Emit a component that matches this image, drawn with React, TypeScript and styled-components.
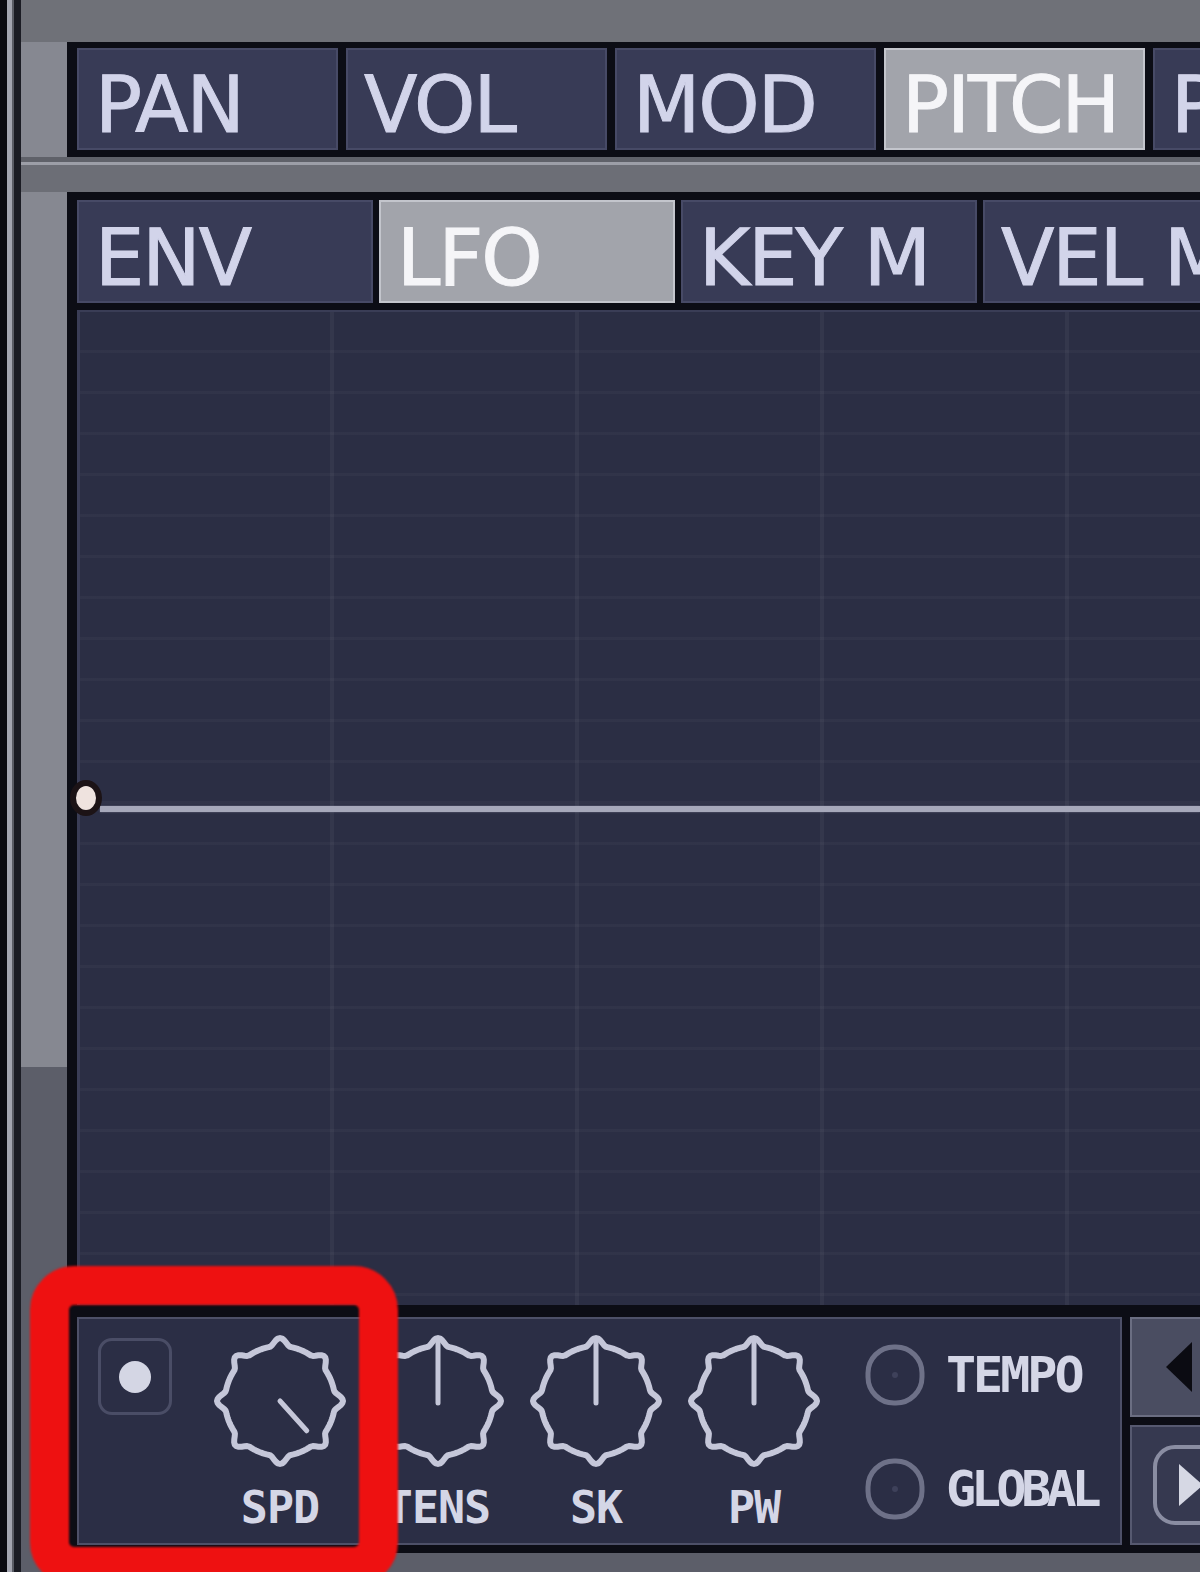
import React from "react";
import styled, { createGlobalStyle } from "styled-components";

const Global = createGlobalStyle`
  html, body { margin: 0; padding: 0; background: #5c5e69; }
  #root { width: 1200px; height: 1572px; }
`;

const Root = styled.div`
  position: relative;
  width: 1200px;
  height: 1572px;
  overflow: hidden;
  display: flex;
  font-family: "DejaVu Sans", "Liberation Sans", sans-serif;
`;

const Rail = styled.div`
  width: 21px;
  flex: none;
  background: linear-gradient(90deg, #0a0a10 0 7px, #a3a5b0 7px 12px, #5b5d66 12px 14px, #1b1c24 14px 21px);
`;

const Body = styled.div`
  flex: 1;
  display: flex;
  flex-direction: column;
  min-width: 0;
  background: linear-gradient(180deg, #6f7178 0 42px, #868891 42px 1067px, #5c5e69 1067px);
`;

const TopGap = styled.div`
  height: 42px;
  flex: none;
`;

const Frame = styled.div<{ $pad: string }>`
  margin-left: 46px;
  background: #0c0d15;
  padding: ${(p) => p.$pad};
  display: flex;
  flex-direction: column;
`;

const Strip = styled.div`
  height: 35px;
  flex: none;
  background: linear-gradient(180deg, #5f6169 0 5px, #9c9ea7 5px 8px, #6c6e76 8px);
`;

const TabRow = styled.div<{ $gap: number }>`
  display: flex;
  gap: ${(p) => p.$gap}px;
  white-space: nowrap;
`;

const Tab = styled.div<{ $w: number; $h: number; $active?: boolean; $top: number }>`
  flex: none;
  box-sizing: border-box;
  width: ${(p) => p.$w}px;
  height: ${(p) => p.$h}px;
  padding: ${(p) => p.$top}px 0 0 16px;
  background: ${(p) => (p.$active ? "#a2a4ab" : "#383b56")};
  border: 2px solid ${(p) => (p.$active ? "#c3c5cc" : "#474a66")};
  color: ${(p) => (p.$active ? "#f5f5f8" : "#d2d4ea")};
  font-size: 78px;
  line-height: 1;
  letter-spacing: -2px;
  -webkit-text-stroke: 1px ${(p) => (p.$active ? "#f5f5f8" : "#d2d4ea")};
  overflow: hidden;
`;

const Graph = styled.div`
  position: relative;
  height: 995px;
  margin-top: 7px;
  box-sizing: border-box;
  border-top: 2px solid #3a3d56;
  border-left: 3px solid #3a3d56;
  background-color: #2b2e44;
  background-image:
    linear-gradient(90deg, transparent 0 250px, rgba(255,255,255,0.045) 250px 254px, transparent 254px 495px,
      rgba(255,255,255,0.045) 495px 499px, transparent 499px 740px, rgba(255,255,255,0.045) 740px 744px,
      transparent 744px 985px, rgba(255,255,255,0.045) 985px 989px, transparent 989px),
    repeating-linear-gradient(180deg, transparent 0 38px, rgba(255,255,255,0.028) 38px 41px);
`;

const CenterLine = styled.div`
  position: absolute;
  left: 20px;
  right: 0;
  top: 494px;
  height: 6px;
  background: #a6a8ba;
  box-shadow: 0 0 2px rgba(166, 168, 186, 0.6);
`;

const Point = styled.div`
  position: absolute;
  left: -10px;
  top: 468px;
  width: 20px;
  height: 24px;
  border-radius: 50%;
  background: #efe3df;
  border: 6px solid #1c1316;
`;

const Toolbar = styled.div`
  display: flex;
  gap: 8px;
  margin-top: 12px;
  height: 228px;
`;

const Panel = styled.div`
  flex: none;
  width: 1045px;
  box-sizing: border-box;
  background: #2b2e45;
  border: 2px solid #4d5068;
  display: flex;
  align-items: flex-start;
  padding-left: 19px;
`;

const LedButton = styled.div`
  flex: none;
  margin-top: 19px;
  width: 74px;
  height: 77px;
  box-sizing: border-box;
  border: 3px solid #4a4d66;
  border-radius: 14px;
  display: flex;
  align-items: center;
  justify-content: center;
`;

const LedDot = styled.div`
  width: 32px;
  height: 32px;
  border-radius: 50%;
  background: #d4d6e4;
`;

const Knobs = styled.div`
  display: flex;
  margin-left: 29px;
`;

const KnobCol = styled.div`
  width: 158px;
  flex: none;
  display: flex;
  flex-direction: column;
  align-items: center;
  padding-top: 12px;
`;

const PixelLabel = styled.div<{ $size: number; $ls: number }>`
  font-family: "DejaVu Sans Mono", "Liberation Mono", monospace;
  font-weight: bold;
  font-size: ${(p) => p.$size}px;
  letter-spacing: ${(p) => p.$ls}px;
  line-height: 1;
  color: #d4d6e6;
  white-space: nowrap;
`;

const KnobLabel = styled(PixelLabel)`
  margin-top: 14px;
`;

const Options = styled.div`
  margin-left: 31px;
  margin-top: 24px;
  display: flex;
  flex-direction: column;
  gap: 50px;
`;

const OptionRow = styled.div`
  display: flex;
  align-items: center;
  gap: 20px;
`;

const Side = styled.div`
  flex: none;
  width: 80px;
  display: flex;
  flex-direction: column;
  gap: 8px;
`;

const SideTop = styled.div`
  height: 100px;
  box-sizing: border-box;
  background: #4a4d61;
  border: 2px solid #6b6e82;
  display: flex;
  align-items: center;
  padding-left: 34px;
`;

const LeftTri = styled.div`
  width: 0;
  height: 0;
  border-top: 25px solid transparent;
  border-bottom: 25px solid transparent;
  border-right: 26px solid #0b0b12;
`;

const SideBottom = styled.div`
  height: 120px;
  box-sizing: border-box;
  background: #363950;
  border: 2px solid #565970;
  padding: 18px 0 0 21px;
`;

const PlayFrame = styled.div`
  width: 80px;
  height: 80px;
  box-sizing: border-box;
  border: 4px solid #8a8da2;
  border-radius: 22px;
  display: flex;
  align-items: center;
  padding-left: 22px;
`;

const RightTri = styled.div`
  width: 0;
  height: 0;
  border-top: 21px solid transparent;
  border-bottom: 21px solid transparent;
  border-left: 24px solid #d6d8e4;
`;

const BottomGap = styled.div`
  flex: 1;
`;

const Highlight = styled.div`
  position: absolute;
  left: 30px;
  top: 1266px;
  width: 368px;
  height: 320px;
  box-sizing: border-box;
  border: 39px solid #ee1111;
  border-radius: 44px;
  filter: blur(0.8px);
`;

function knobPath(cx: number, cy: number, R: number, bump: number) {
  const pts: string[] = [];
  for (let d = 0; d < 360; d += 2) {
    const t = (d * Math.PI) / 180;
    const r = R + bump * Math.pow(Math.max(0, Math.cos(8 * t)), 2);
    pts.push(`${(cx + r * Math.sin(t)).toFixed(2)},${(cy - r * Math.cos(t)).toFixed(2)}`);
  }
  return "M" + pts.join(" L") + " Z";
}

const KNOB_OUTLINE = knobPath(70, 70, 55, 8);

const Knob: React.FC<{ label: string; angle: number; fromRim?: boolean }> = ({ label, angle, fromRim }) => {
  const t = (angle * Math.PI) / 180;
  const x2 = 70 + 40 * Math.sin(t);
  const y2 = 70 - 40 * Math.cos(t);
  return (
    <KnobCol>
      <svg width="140" height="140" viewBox="0 0 140 140">
        <path d={KNOB_OUTLINE} fill="none" stroke="#c5c7d9" strokeWidth="6" strokeLinejoin="round" />
        {fromRim ? (
          <line x1="70" y1="12" x2="70" y2="72" stroke="#c5c7d9" strokeWidth="5" strokeLinecap="round" />
        ) : (
          <line x1="70" y1="70" x2={x2} y2={y2} stroke="#c5c7d9" strokeWidth="5" strokeLinecap="round" />
        )}
      </svg>
      <KnobLabel $size={45} $ls={-1}>{label}</KnobLabel>
    </KnobCol>
  );
};

const Radio: React.FC = () => (
  <svg width="62" height="64" viewBox="0 0 62 64">
    <rect x="4" y="4" width="54" height="56" rx="26" fill="none" stroke="#6e7188" strokeWidth="5" />
    <circle cx="31" cy="32" r="3" fill="#3e415a" />
  </svg>
);

export default function App() {
  const row1 = ["PAN", "VOL", "MOD", "PITCH", "P"];
  const row2 = ["ENV", "LFO", "KEY M", "VEL M"];
  return (
    <Root>
      <Global />
      <Rail />
      <Body>
        <TopGap />
        <Frame $pad="6px 0 7px 10px">
          <TabRow $gap={8}>
            {row1.map((t) => (
              <Tab key={t} $w={261} $h={102} $top={16} $active={t === "PITCH"}>
                {t}
              </Tab>
            ))}
          </TabRow>
        </Frame>
        <Strip />
        <Frame $pad="8px 0 8px 10px">
          <TabRow $gap={6}>
            {row2.map((t) => (
              <Tab key={t} $w={296} $h={103} $top={17} $active={t === "LFO"}>
                {t}
              </Tab>
            ))}
          </TabRow>
          <Graph>
            <CenterLine />
            <Point />
          </Graph>
          <Toolbar>
            <Panel>
              <LedButton>
                <LedDot />
              </LedButton>
              <Knobs>
                <Knob label="SPD" angle={138} />
                <Knob label="TENS" angle={0} fromRim />
                <Knob label="SK" angle={0} fromRim />
                <Knob label="PW" angle={0} fromRim />
              </Knobs>
              <Options>
                <OptionRow>
                  <Radio />
                  <PixelLabel $size={50} $ls={-3}>TEMPO</PixelLabel>
                </OptionRow>
                <OptionRow>
                  <Radio />
                  <PixelLabel $size={50} $ls={-5}>GLOBAL</PixelLabel>
                </OptionRow>
              </Options>
            </Panel>
            <Side>
              <SideTop>
                <LeftTri />
              </SideTop>
              <SideBottom>
                <PlayFrame>
                  <RightTri />
                </PlayFrame>
              </SideBottom>
            </Side>
          </Toolbar>
        </Frame>
        <BottomGap />
      </Body>
      <Highlight />
    </Root>
  );
}
